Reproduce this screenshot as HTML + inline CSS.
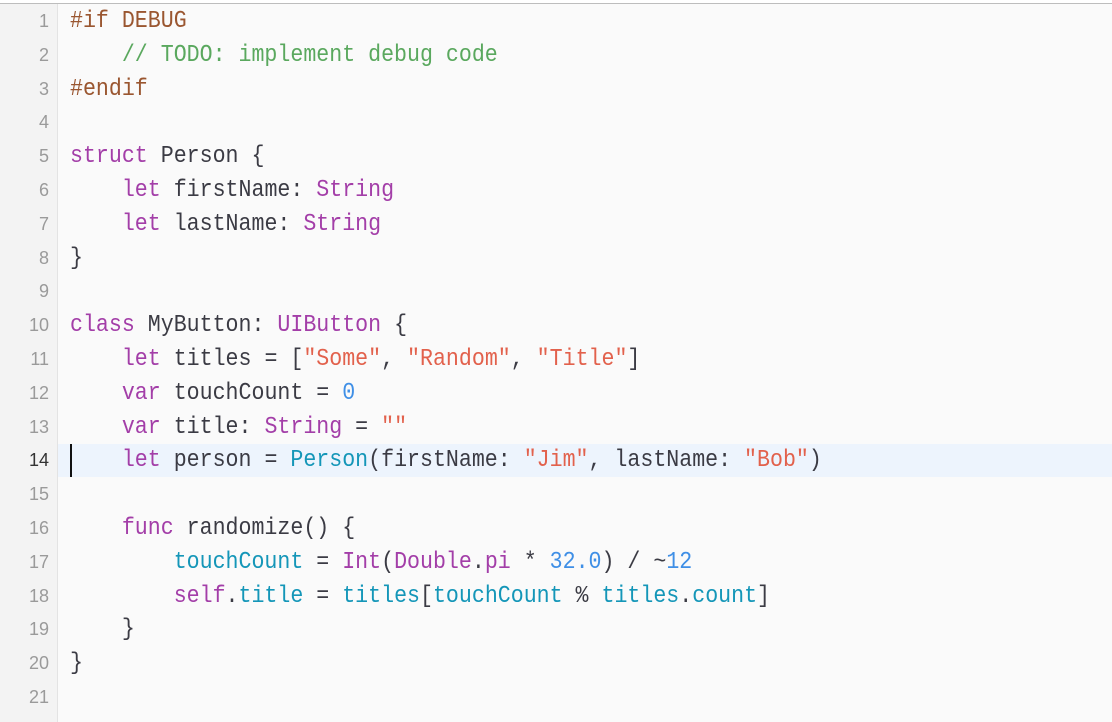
<!DOCTYPE html>
<html><head><meta charset="utf-8"><style>
html,body{margin:0;padding:0;width:1112px;height:722px;overflow:hidden;background:#fafafa;}
.top{position:absolute;left:0;top:0;width:1112px;height:3px;background:#fff;border-bottom:1px solid #bdbdbd;}
.gut{position:absolute;left:0;top:4px;width:57px;height:718px;background:#f3f3f3;border-right:1px solid #e3e3e3;}
.hl{position:absolute;left:58px;top:444px;width:1054px;height:33px;background:#edf4fd;}
.caret{position:absolute;left:70px;top:444px;width:2px;height:33px;background:#111;}
.ln{position:absolute;left:0;top:5px;width:49px;text-align:right;font:18px/33.8px "Liberation Sans",sans-serif;color:#9a9a9a;}
.ln .c{color:#333;}
pre{position:absolute;left:70px;top:5px;margin:0;font:24px/33.8px "Liberation Mono",monospace;color:#3b3b44;transform:scaleX(0.9);transform-origin:0 0;}
.p{color:#9a5630}.cm{color:#5aa85e}.k{color:#a33ea8}.t{color:#1496b8}.s{color:#e2614c}.n{color:#3f8fe6}
</style></head><body>
<div class="top"></div><div class="gut"></div><div class="hl"></div><div class="caret"></div>
<div class="ln">1<br>2<br>3<br>4<br>5<br>6<br>7<br>8<br>9<br>10<br>11<br>12<br>13<br><span class="c">14</span><br>15<br>16<br>17<br>18<br>19<br>20<br>21</div>
<pre><span class="p">#if DEBUG</span>
    <span class="cm">// TODO: implement debug code</span>
<span class="p">#endif</span>

<span class="k">struct</span> Person {
    <span class="k">let</span> firstName: <span class="k">String</span>
    <span class="k">let</span> lastName: <span class="k">String</span>
}

<span class="k">class</span> MyButton: <span class="k">UIButton</span> {
    <span class="k">let</span> titles = [<span class="s">"Some"</span>, <span class="s">"Random"</span>, <span class="s">"Title"</span>]
    <span class="k">var</span> touchCount = <span class="n">0</span>
    <span class="k">var</span> title: <span class="k">String</span> = <span class="s">""</span>
    <span class="k">let</span> person = <span class="t">Person</span>(firstName: <span class="s">"Jim"</span>, lastName: <span class="s">"Bob"</span>)

    <span class="k">func</span> randomize() {
        <span class="t">touchCount</span> = <span class="k">Int</span>(<span class="k">Double</span>.<span class="k">pi</span> * <span class="n">32.0</span>) / ~<span class="n">12</span>
        <span class="k">self</span>.<span class="t">title</span> = <span class="t">titles</span>[<span class="t">touchCount</span> % <span class="t">titles</span>.<span class="t">count</span>]
    }
}
</pre>
</body></html>
